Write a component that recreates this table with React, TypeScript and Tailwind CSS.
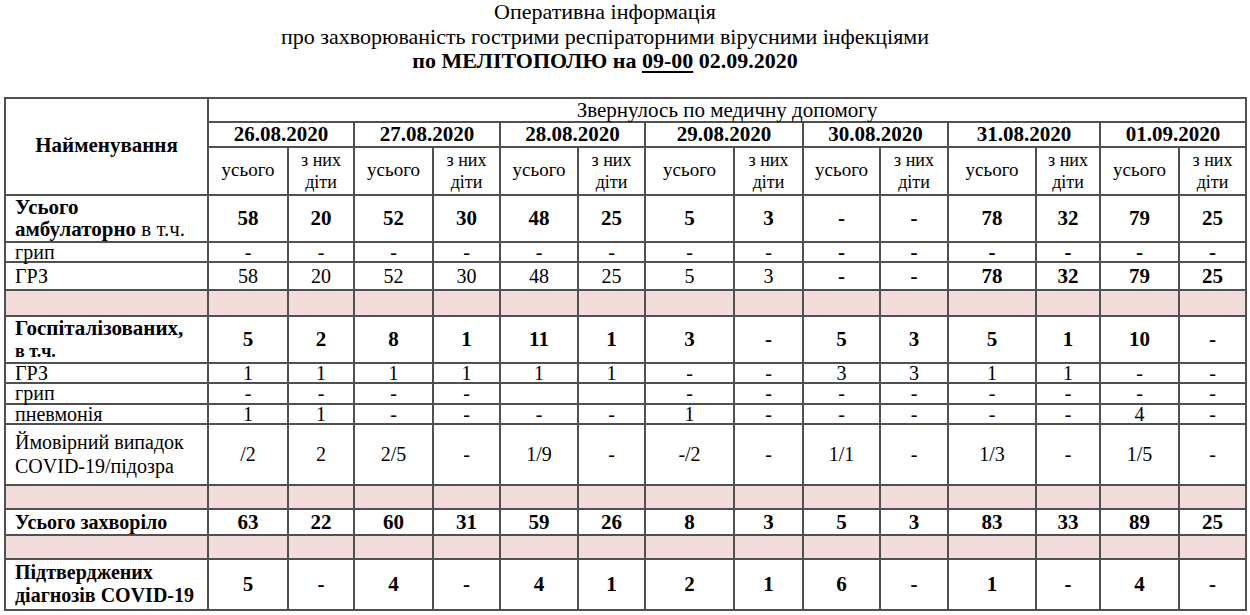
import React from 'react';

type Row = {
  label: React.ReactNode;
  values: string[];
  h: string;
  bold?: boolean;
  boldFrom?: number;
  pink?: boolean;
  leading?: string;
  labelSize?: string;
};

const dates = ['26.08.2020', '27.08.2020', '28.08.2020', '29.08.2020', '30.08.2020', '31.08.2020', '01.09.2020'];
const colWidths = ['w-[80px]', 'w-[66px]', 'w-[79px]', 'w-[67px]', 'w-[78px]', 'w-[67px]', 'w-[89px]', 'w-[69px]', 'w-[77px]', 'w-[68px]', 'w-[88px]', 'w-[64px]', 'w-[79px]', 'w-[67px]'];

const empty = Array(14).fill('');

const rows: Row[] = [
  {
    label: (
      <>
        <b>Усього</b>
        <br />
        <b>амбулаторно</b> в т.ч.
      </>
    ),
    values: ['58', '20', '52', '30', '48', '25', '5', '3', '-', '-', '78', '32', '79', '25'],
    h: 'h-[47px]',
    bold: true,
    leading: 'leading-[22px]',
    labelSize: 'text-[21px]',
  },
  { label: 'грип', values: Array(14).fill('-'), h: 'h-[20px]', boldFrom: 8 },
  { label: 'ГРЗ', values: ['58', '20', '52', '30', '48', '25', '5', '3', '-', '-', '78', '32', '79', '25'], h: 'h-[28px]', boldFrom: 8 },
  { label: '', values: empty, h: 'h-[26px]', pink: true },
  {
    label: (
      <b>
        Госпіталізованих,
        <br />
        <span className="text-[18px]">в т.ч.</span>
      </b>
    ),
    values: ['5', '2', '8', '1', '11', '1', '3', '-', '5', '3', '5', '1', '10', '-'],
    h: 'h-[46px]',
    bold: true,
    leading: 'leading-[22px]',
    labelSize: 'text-[21px]',
  },
  { label: 'ГРЗ', values: ['1', '1', '1', '1', '1', '1', '-', '-', '3', '3', '1', '1', '-', '-'], h: 'h-[19px]' },
  { label: 'грип', values: ['-', '-', '-', '-', '', '', '-', '-', '-', '-', '-', '-', '-', '-'], h: 'h-[21px]' },
  { label: 'пневмонія', values: ['1', '1', '-', '-', '-', '-', '1', '-', '-', '-', '-', '-', '4', '-'], h: 'h-[20px]' },
  {
    label: (
      <>
        Ймовірний випадок
        <br />
        COVID-19/підозра
      </>
    ),
    values: ['/2', '2', '2/5', '-', '1/9', '-', '-/2', '-', '1/1', '-', '1/3', '-', '1/5', '-'],
    h: 'h-[61px]',
    leading: 'leading-[24px]',
  },
  { label: '', values: empty, h: 'h-[24px]', pink: true },
  { label: <b>Усього захворіло</b>, values: ['63', '22', '60', '31', '59', '26', '8', '3', '5', '3', '83', '33', '89', '25'], h: 'h-[26px]', bold: true },
  { label: '', values: empty, h: 'h-[24px]', pink: true },
  {
    label: (
      <b>
        Підтверджених
        <br />
        діагнозів COVID-19
      </b>
    ),
    values: ['5', '-', '4', '-', '4', '1', '2', '1', '6', '-', '1', '-', '4', '-'],
    h: 'h-[51px]',
    bold: true,
    leading: 'leading-[23px]',
  },
];

const cell = 'border-2 border-[#505050] p-0 text-center align-middle';

export default function App() {
  return (
    <div className="w-[1250px] h-[615px] bg-white text-black font-['Liberation_Serif',serif] overflow-hidden">
      <div className="w-[1210px] text-center text-[22px] leading-[24.5px]">
        <div>Оперативна інформація</div>
        <div>про захворюваність гострими респіраторними вірусними інфекціями</div>
        <div className="font-bold">
          по МЕЛІТОПОЛЮ на <span className="underline decoration-2 underline-offset-3">09-00</span> 02.09.2020
        </div>
      </div>

      <table className="mt-[23px] ml-[4px] table-fixed border-collapse border-2 border-[#505050] w-[1241px]">
        <colgroup>
          <col className="w-[203px]" />
          {colWidths.map((w, i) => (
            <col key={i} className={w} />
          ))}
        </colgroup>
        <thead>
          <tr className="h-[24px]">
            <th rowSpan={3} className={`${cell} font-bold text-[21px]`}>
              Найменування
            </th>
            <th colSpan={14} className={`${cell} font-normal text-[21px] leading-[20px]`}>
              Звернулось по медичну допомогу
            </th>
          </tr>
          <tr className="h-[25px]">
            {dates.map((d) => (
              <th key={d} colSpan={2} className={`${cell} font-bold text-[21px] leading-[20px]`}>
                {d}
              </th>
            ))}
          </tr>
          <tr className="h-[48px]">
            {dates.map((d) => (
              <React.Fragment key={d}>
                <th className={`${cell} font-normal text-[19px]`}>усього</th>
                <th className={`${cell} font-normal text-[18px] leading-[22px]`}>
                  з них
                  <br />
                  діти
                </th>
              </React.Fragment>
            ))}
          </tr>
        </thead>
        <tbody>
          {rows.map((r, ri) => (
            <tr key={ri} className={`${r.h} ${r.pink ? 'bg-[#f2dcdb]' : ''}`}>
              <td className={`${cell} text-left pl-[9px] ${r.labelSize ?? 'text-[20px]'} ${r.leading ?? 'leading-[18px]'}`}>
                {r.label}
              </td>
              {r.values.map((v, vi) => {
                const bold = r.bold || (r.boldFrom !== undefined && vi >= r.boldFrom);
                return (
                  <td
                    key={vi}
                    className={`${cell} leading-[18px] ${bold ? 'font-bold text-[21px]' : 'text-[20px]'}`}
                  >
                    {v}
                  </td>
                );
              })}
            </tr>
          ))}
        </tbody>
      </table>
    </div>
  );
}
